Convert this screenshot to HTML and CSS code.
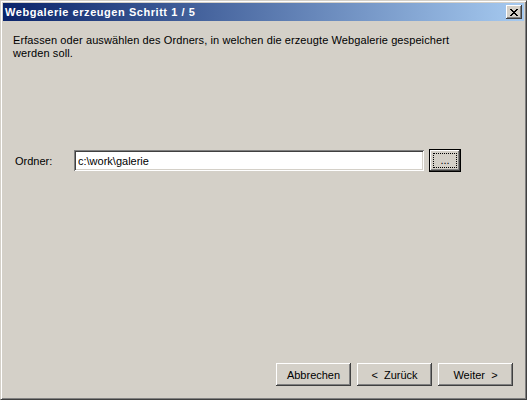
FILE: index.html
```html
<html>
<head>
    <title>Webgalerie erzeugen</title>
    <link rel="stylesheet" href="styles.css">
</head>
<body>
    <div class="window">
        <div class="titlebar">
            <span class="title">Webgalerie erzeugen Schritt 1 / 5</span>
            <button class="close-btn" aria-label="Schliessen">
                <svg width="8" height="7" viewBox="0 0 8 7">
                    <path d="M0 0h2v1h-2zM6 0h2v1h-2zM1 1h2v1h-2zM5 1h2v1h-2zM2 2h4v1h-4zM3 3h2v1h-2zM2 4h4v1h-4zM1 5h2v1h-2zM5 5h2v1h-2zM0 6h2v1h-2zM6 6h2v1h-2z" fill="#000"/>
                </svg>
            </button>
        </div>

        <div class="content">
            <p class="intro">Erfassen oder auswählen des Ordners, in welchen die erzeugte Webgalerie gespeichert werden soll.</p>

            <div class="folder-row">
                <label for="folder">Ordner:</label>
                <input type="text" id="folder" value="c:\work\galerie">
                <button class="btn browse-btn"><span class="focus">...</span></button>
            </div>

            <div class="actions">
                <button class="btn">Abbrechen</button>
                <button class="btn">&lt;&nbsp; Zurück</button>
                <button class="btn">Weiter &nbsp;&gt;</button>
            </div>
        </div>
    </div>
</body>
</html>
```

FILE: styles.css
```css
body {
    margin: 0;
    padding: 0;
    background: #d4d0c8;
    font-family: "Liberation Sans", Arial, sans-serif;
    font-size: 11px;
    color: #000;
}

.window {
    box-sizing: border-box;
    width: 527px;
    height: 400px;
    padding: 2px;
    background: #d4d0c8;
    border: 1px solid;
    border-color: #d4d0c8 #404040 #404040 #d4d0c8;
    box-shadow: inset 1px 1px #fff, inset -1px -1px #808080;
    display: flex;
    flex-direction: column;
}

.titlebar {
    height: 18px;
    background: linear-gradient(90deg, #0a246a, #a6caf0);
    display: flex;
    align-items: center;
    justify-content: space-between;
    padding: 0 2px;
}

.title {
    color: #fff;
    font-weight: bold;
    font-size: 11px;
    letter-spacing: 0.55px;
}

.close-btn {
    width: 16px;
    height: 14px;
    padding: 0;
    border: none;
    background: #d4d0c8;
    box-shadow: inset -1px -1px #404040, inset 1px 1px #fff, inset -2px -2px #808080;
    display: flex;
    align-items: center;
    justify-content: center;
}

.content {
    flex: 1;
    display: flex;
    flex-direction: column;
    padding: 13px 11px 11px 10px;
}

.intro {
    margin: 0;
    line-height: 13px;
    letter-spacing: 0.1px;
    max-width: 460px;
}

.folder-row {
    display: flex;
    align-items: center;
    margin-top: 89px;
    padding-left: 2px;
}

.folder-row label {
    width: 59px;
}

.folder-row input {
    box-sizing: border-box;
    width: 350px;
    height: 21px;
    margin-right: 5px;
    padding: 1px 4px 0;
    border: none;
    outline: none;
    background: #fff;
    font-family: "Liberation Sans", Arial, sans-serif;
    font-size: 11px;
    box-shadow: inset 1px 1px #808080, inset -1px -1px #fff, inset 2px 2px #404040, inset -2px -2px #d4d0c8;
}

.btn {
    box-sizing: border-box;
    width: 75px;
    height: 23px;
    padding: 0;
    border: none;
    background: #d4d0c8;
    font-family: "Liberation Sans", Arial, sans-serif;
    font-size: 11px;
    color: #000;
    box-shadow: inset -1px -1px #404040, inset 1px 1px #fff, inset -2px -2px #808080;
}

.browse-btn {
    width: 32px;
    border: 1px solid #000;
    padding: 3px;
    display: flex;
}

.browse-btn .focus {
    flex: 1;
    border: 1px dotted #000;
    line-height: 11px;
    padding-top: 1px;
}

.actions {
    margin-top: auto;
    display: flex;
    justify-content: flex-end;
    gap: 6px;
}
```
